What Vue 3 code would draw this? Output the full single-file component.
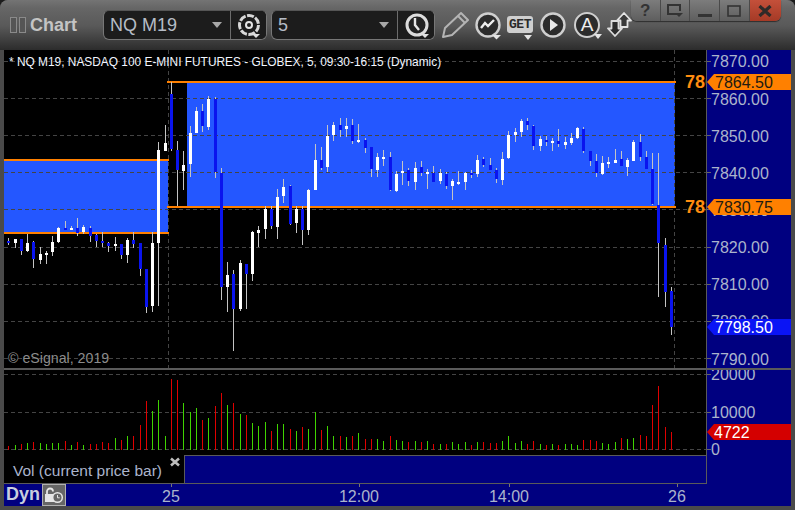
<script setup>
const bars = [
['b',453,459,445,465],['w',447,459,447,474],['b',447,483,447,495],['w',459,483,432,486],['b',456,507,453,534],
['w',492,510,471,522],['w',489,495,483,522],['w',456,486,438,498],['w',414,456,411,459],['b',414,420,393,420],
['w',414,420,408,420],['b',414,429,384,438],['w',411,426,405,432],['b',414,438,408,456],['b',435,453,432,471],
['b',453,459,426,471],['b',459,468,456,486],['w',462,468,441,483],['b',462,495,462,507],['w',450,495,444,519],
['b',450,462,426,474],['b',459,537,459,558],['b',537,651,537,669],['w',459,648,426,666],['w',180,459,156,648],
['w',159,183,105,183],['b',12,177,-24,183],['b',180,240,153,348],['w',225,243,183,300],['w',129,222,108,261],
['w',63,129,51,129],['b',63,108,42,126],['w',27,111,18,120],['b',27,246,21,264],['b',249,591,234,630],
['w',555,591,516,666],['b',552,657,540,783],['w',519,657,510,663],['b',522,552,522,657],['w',426,552,423,573],
['w',420,429,408,471],['w',357,417,348,447],['b',357,408,348,417],['w',321,411,297,447],['w',291,318,267,339],
['b',288,402,285,405],['w',357,399,348,429],['b',357,420,348,465],['w',300,420,297,435],['w',210,300,162,300],
['b',210,234,171,240],['w',138,231,105,246],['w',105,135,96,153],['b',105,120,84,141],['w',108,117,84,141],
['b',105,153,87,162],['w',150,156,102,159],['b',150,174,144,189],['b',171,237,171,261],['w',201,240,189,261],
['w',201,207,180,228],['b',201,300,186,303],['w',252,303,243,306],['w',243,249,213,285],['b',240,273,234,288],
['w',234,276,216,300],['b',231,249,213,258],['w',246,252,237,297],['b',249,276,228,276],['w',249,273,237,282],
['b',252,288,246,297],['w',273,288,267,330],['w',276,282,243,285],['w',249,276,246,300],['b',249,255,240,264],
['w',210,252,195,261],['b',207,225,201,231],['b',225,240,204,240],['b',240,267,234,279],['w',207,270,186,285],
['w',135,204,123,207],['w',126,135,114,156],['w',93,126,87,141],['b',93,105,84,120],['b',108,168,105,180],
['w',147,168,138,183],['b',150,156,138,168],['w',153,159,144,183],['b',153,162,117,171],['w',156,165,141,177],
['w',144,159,129,165],['w',114,144,111,147],['b',117,183,111,189],['b',183,213,183,228],['b',213,249,192,261],
['w',219,252,198,255],['w',216,222,201,234],['w',210,219,177,219],['b',207,228,183,228],['w',210,231,204,258],
['w',156,213,150,213],['b',156,201,132,213],['b',201,237,183,237],['b',237,342,189,345],['b',345,459,189,621],
['b',465,606,444,651],['b',603,711,591,735]
]
const barX = i => Math.ceil(8 + i * 6.25)
const py = v => 90 + v / 3
const candles = bars.map((b, i) => ({
  x: barX(i), blue: b[0] === 'b', top: py(b[1]), h: Math.max(py(b[2]) - py(b[1]), 2), wt: py(b[3]), wb: py(b[4])
}))

const vol = [
'r243','g240','r237','g234','r231','g234','g237','g234','g234','r228','g240','r231','g240','r237','r237','r231',
'r234','g219','r225','g213','r213','r180','r108','g138','g105','g213','r42','r45','g114','g141','g129','r165',
'g159','r123','r84','g120','r114','g147','r150','g174','g183','g171','r198','g177','g177','r192','g198','r186',
'g192','g141','r195','g183','g213','r213','g216','r213','g204','r222','r222','g222','g228','r213','g225','g228',
'r231','g228','r231','g228','r237','g237','r237','g231','g237','g231','r240','g231','r231','r234','r234','g228',
'g213','g234','g228','r237','r228','g237','r240','g237','r240','g237','g237','g240','r225','r225','r228','g234',
'g237','g231','r219','g222','g219','r210','r213','r120','r63','r186','r201'
].map((s, i) => ({ x: barX(i) + 0.5, red: s[0] === 'r', top: 365 + Number(s.slice(1)) / 3 }))

const grid = [61, 98, 135, 172, 209, 247, 284, 321, 358]
const baselines = [67, 105, 142, 179, 216, 253, 290, 327, 365]
const prices = ['7870.00','7860.00','7850.00','7840.00','7830.00','7820.00','7810.00','7800.00','7790.00']
  .map((t, i) => ({ t, y: grid[i], b: baselines[i] }))
const volLabels = [{ t: '20000', y: 374 }, { t: '10000', y: 412 }, { t: '0', y: 449 }]
const times = [{ t: '25', x: 171 }, { t: '12:00', x: 359 }, { t: '14:00', x: 509 }, { t: '26', x: 677 }]
const tagPts = c => `707,${c} 714,${c - 8} 791,${c - 8} 791,${c + 8} 714,${c + 8}`
</script>

<template>
  <div class="window">
    <header class="toolbar">
      <div class="pin"><span></span><span></span></div>
      <div class="app-title">Chart</div>

      <div class="group first">
        <div class="combo sym"><span>NQ M19</span><i class="caret"></i></div>
        <button class="cell gear">
          <svg width="30" height="28" viewBox="0 0 30 28">
            <circle cx="15" cy="14" r="9.5" fill="none" stroke="#d8d8d8" stroke-width="3" stroke-dasharray="7 1.5"/>
            <circle cx="15" cy="14" r="3" fill="none" stroke="#e4e4e4" stroke-width="2"/>
            <path d="M18 23h8l-4 4z" fill="#e0e0e0"/>
          </svg>
        </button>
      </div>

      <div class="group">
        <div class="combo intv"><span>5</span><i class="caret"></i></div>
        <button class="cell clock">
          <svg width="36" height="28" viewBox="0 0 36 28">
            <circle cx="19" cy="14" r="10" fill="#222" stroke="#dcdcdc" stroke-width="3"/>
            <path d="M17 7v7l4 5" fill="none" stroke="#e6e6e6" stroke-width="2.4"/>
            <path d="M23 23h8l-4 4z" fill="#e0e0e0"/>
          </svg>
        </button>
      </div>

      <svg class="tool pencil" width="28" height="28" viewBox="0 0 28 28">
        <path d="M2 26l2-9L20 2l7 7-16 15z" fill="none" stroke="#b4b4b4" stroke-width="2" stroke-linejoin="round"/>
        <path d="M17 5l7 7" stroke="#b4b4b4" stroke-width="2"/>
      </svg>

      <svg class="tool circle-tool" width="30" height="30" viewBox="0 0 30 30">
        <circle cx="14" cy="13" r="11.5" fill="#2c2c2c" stroke="#cfcfcf" stroke-width="2.4"/>
        <path d="M7 16l4-5 3 3 6-6" fill="none" stroke="#eee" stroke-width="2.4"/>
        <path d="M18 23h9l-4.500 4.500z" fill="#e4e4e4"/>
      </svg>

      <div class="get"><span>GET</span><i></i></div>

      <svg class="tool play" width="26" height="26" viewBox="0 0 26 26">
        <circle cx="13" cy="13" r="11.500" fill="#2c2c2c" stroke="#cfcfcf" stroke-width="2.400"/>
        <path d="M10 7l8 6-8 6z" fill="#e8e8e8"/>
      </svg>

      <div class="auto">
        <span>A</span>
        <i></i>
      </div>

      <svg class="tool arrows" width="26" height="26" viewBox="0 0 26 26">
        <path d="M17 1l7 7.500h-3.500V15h-7V8.500H10z" fill="#3a3a3a" stroke="#e4e4e4" stroke-width="1.800" stroke-linejoin="round"/>
        <path d="M8 24l-7-7.500h3.500V9h7v7.500H15z" fill="#2c2c2c" stroke="#dcdcdc" stroke-width="1.800" stroke-linejoin="round"/>
      </svg>

      <div class="winctl">
        <button class="wbtn q">?</button>
        <button class="wbtn">
          <svg width="18" height="16" viewBox="0 0 18 16"><path d="M12 11H2V2h12v6" fill="none" stroke="#333" stroke-width="2"/><path d="M9 10h8l-4 4z" fill="#333"/></svg>
        </button>
        <button class="wbtn">
          <svg width="14" height="16" viewBox="0 0 14 16"><rect y="11" width="14" height="3" fill="#333"/></svg>
        </button>
        <button class="wbtn">
          <svg width="14" height="12" viewBox="0 0 14 12"><rect x="1" y="1" width="12" height="10" fill="none" stroke="#333" stroke-width="1.600"/></svg>
        </button>
        <button class="wbtn close">
          <svg width="14" height="12" viewBox="0 0 14 12"><path d="M1.500 1l11 10M12.500 1l-11 10" stroke="#2f2a28" stroke-width="3.200"/></svg>
        </button>
      </div>
    </header>

    <main class="content">
      <section class="row price-row">
        <svg class="plot" width="703" height="318" viewBox="4 50 703 318" shape-rendering="crispEdges">
          <rect x="4" y="50" width="702" height="318" fill="#000"/>
          <rect x="4" y="160" width="164" height="73" fill="#2457ff"/>
          <rect x="187" y="83" width="488" height="123" fill="#2457ff"/>
          <line v-for="g in grid" :key="g" x1="4" x2="706" :y1="g + 0.5" :y2="g + 0.5" class="grid"/>
          <line x1="168.5" x2="168.5" y1="50" y2="368" class="grid"/>
          <line x1="674.5" x2="674.5" y1="50" y2="368" class="grid"/>
          <rect x="4" y="159" width="165" height="2" fill="#ff8000"/>
          <rect x="4" y="232" width="165" height="2" fill="#ff8000"/>
          <rect x="167" y="81" width="509" height="2" fill="#ff8000"/>
          <rect x="167" y="206" width="509" height="2" fill="#ff8000"/>
          <g v-for="c in candles" :key="c.x">
            <rect :x="c.x" :y="c.wt" width="1" :height="c.wb - c.wt" fill="#c4c4c4"/>
            <rect :x="c.x - 1" :y="c.top" width="3" :height="c.h" :fill="c.blue ? '#0a14ee' : '#fff'"/>
          </g>
          <line x1="706.5" x2="706.5" y1="50" y2="368" stroke="#5a5a5a"/>
          <g shape-rendering="auto">
            <text x="9" y="66" class="study">* NQ M19, NASDAQ 100 E-MINI FUTURES - GLOBEX, 5, 09:30-16:15 (Dynamic)</text>
            <text x="8" y="363" class="copy">© eSignal, 2019</text>
            <svg x="685" y="50" width="21" height="318" viewBox="685 50 21 318" overflow="hidden">
              <text x="685" y="88" class="lvl">7864.50</text>
              <text x="685" y="213" class="lvl">7830.75</text>
            </svg>
          </g>
        </svg>
        <svg class="axis" width="84" height="318" viewBox="707 50 84 318">
          <g v-for="p in prices" :key="p.t">
            <line x1="707" x2="711" :y1="p.y + 0.5" :y2="p.y + 0.5" stroke="#666"/>
            <text x="711" :y="p.b" class="axl">{{ p.t }}</text>
          </g>
          <polygon :points="tagPts(82)" fill="#ff8000"/>
          <text x="715" y="88" class="axl dark">7864.50</text>
          <polygon :points="tagPts(207)" fill="#ff8000"/>
          <text x="715" y="213" class="axl dark">7830.75</text>
          <polygon :points="tagPts(327)" fill="#0a14f5"/>
          <text x="715" y="333" class="axl bright">7798.50</text>
        </svg>
      </section>

      <div class="divider"></div>

      <section class="row vol-row">
        <svg class="plot" width="703" height="85" viewBox="4 370 703 85" shape-rendering="crispEdges">
          <rect x="4" y="370" width="702" height="85" fill="#000"/>
          <line v-for="v in volLabels" :key="v.t" x1="4" x2="706" :y1="v.y + 0.500" :y2="v.y + 0.500" class="grid"/>
          <line v-for="b in vol" :key="b.x" :x1="b.x" :x2="b.x" :y1="b.top" y2="450" :stroke="b.red ? '#e00000' : '#3fd400'"/>
          <line x1="706.5" x2="706.5" y1="370" y2="455" stroke="#5a5a5a"/>
        </svg>
        <svg class="axis" width="84" height="85" viewBox="707 370 84 85">
          <g v-for="v in volLabels" :key="v.t">
            <line x1="707" x2="711" :y1="v.y + 0.500" :y2="v.y + 0.500" stroke="#666"/>
            <text x="711" :y="v.y + 6" class="axl">{{ v.t }}</text>
          </g>
          <polygon :points="tagPts(432)" fill="#d40000"/>
          <text x="714" y="438" class="axl bright">4722</text>
        </svg>
      </section>

      <section class="row legend-row">
        <div class="legend-main">
          <div class="legend">
            <span>Vol (current price bar)</span>
            <svg class="x" width="10" height="10" viewBox="0 0 10 10"><path d="M1 1.500l8 7M9 1.500l-8 7" stroke="#bcbcbc" stroke-width="2.600"/></svg>
          </div>
          <div class="legend-fill"></div>
        </div>
      </section>

      <section class="row time-row">
        <span class="dyn">Dyn</span>
        <div class="lock">
          <svg width="20" height="18" viewBox="0 0 20 18">
            <path d="M3 9V5.500a3 3 0 0 1 6 0" fill="none" stroke="#e6e6e6" stroke-width="1.800"/>
            <rect x="1" y="8" width="10" height="8" fill="#e6e6e6"/>
            <circle cx="13.500" cy="11.500" r="4.800" fill="#666" stroke="#e6e6e6" stroke-width="1.500"/>
            <path d="M13.500 9v2.800h2.200" fill="none" stroke="#e6e6e6" stroke-width="1"/>
          </svg>
        </div>
        <svg class="times" width="725" height="22" viewBox="66 484 725 22">
          <g v-for="t in times" :key="t.t">
            <line :x1="t.x + 0.500" :x2="t.x + 0.500" y1="484" y2="487" stroke="#777"/>
            <text :x="t.x" y="502" text-anchor="middle" class="axl">{{ t.t }}</text>
          </g>
        </svg>
      </section>
    </main>
  </div>
</template>

<style>
html, body { margin: 0; background: #1c1c1c; }
</style>

<style scoped>
.window {
  width: 795px;
  height: 510px;
  background: #4a4a4a;
  border-radius: 8px 8px 0 0;
  overflow: hidden;
  font-family: "Liberation Sans", Arial, sans-serif;
}
.toolbar {
  position: relative;
  height: 50px;
  display: flex;
  align-items: center;
  background: linear-gradient(#747474 0, #666 8px, #595959 26px, #2c2c2c 50px);
  box-sizing: border-box;
}
.pin { display: flex; gap: 2px; margin-left: 10px; }
.pin span { width: 5px; height: 14px; border: 1px solid #8a8a8a; background: #555; }
.app-title { margin-left: 4px; width: 73px; font-size: 18px; font-weight: bold; color: #c4c4c4; }
.group {
  display: flex;
  height: 30px;
  box-sizing: border-box;
  border: 1px solid #777;
  border-top-color: #555;
  border-radius: 6px;
  background: #1c1c1c;
  overflow: hidden;
}
.combo { display: flex; align-items: center; justify-content: space-between; padding: 0 8px 0 6px; box-sizing: border-box; color: #b6bcc6; font-size: 18px; }
.sym { width: 126px; }
.intv { width: 125px; margin-right: 0; }
.caret { width: 0; height: 0; border-left: 5px solid transparent; border-right: 5px solid transparent; border-top: 6px solid #a8a8a8; }
.cell { padding: 0; margin: 0; background: #1c1c1c; border: 0; border-left: 1px solid #6c6c6c; display: flex; align-items: center; }
.gear { width: 36px; justify-content: center; }
.clock { width: 37px; justify-content: center; }
.group + .group { margin-left: 4px; }
.tool { flex: none; }
.pencil { margin-left: 6px; }
.circle-tool { margin-left: 5px; margin-top: 3px; }
.get { position: relative; margin-left: 2px; width: 28px; height: 30px; }
.get span {
  position: absolute; left: 1px; top: 6px; width: 26px; height: 17px; text-align: center;
  background: #cfcfcf; border-radius: 3px; color: #2a2a2a;
  font: bold 13px/17px "Liberation Mono", monospace;
  letter-spacing: -0.500px;
}
.get i { position: absolute; left: 18px; top: 25px; border-left: 4.500px solid transparent; border-right: 4.500px solid transparent; border-top: 5px solid #e4e4e4; }
.play { margin-left: 6px; }
.auto {
  position: relative; margin-left: 8px; width: 26px; height: 26px; box-sizing: border-box;
  border: 2.400px solid #cfcfcf; border-radius: 50%; background: #2c2c2c;
  display: flex; align-items: center; justify-content: center; color: #eee; font-size: 19px;
}
.auto i { position: absolute; right: -4px; bottom: -3px; border-left: 4.500px solid transparent; border-right: 4.500px solid transparent; border-top: 5px solid #e4e4e4; }
.arrows { margin-left: 7px; }
.winctl {
  position: absolute; left: 631px; top: 0; width: 150px; height: 21px; display: flex;
  border-radius: 0 0 6px 6px; overflow: hidden; box-shadow: 0 1px 1px #2e2e2e;
}
.wbtn {
  flex: 1; padding: 0; margin: 0; border: 0; border-right: 1px solid #4a4a4a;
  background: linear-gradient(#7c7c7c, #5e5e5e);
  display: flex; align-items: center; justify-content: center; color: #333;
}
.q { font: bold 17px "Liberation Sans", Arial, sans-serif; }
.close { flex: 1.100; border-right: 0; background: linear-gradient(#c4503a, #a53a26); }
.content { margin: 0 4px; background: #000080; height: 456px; display: flex; flex-direction: column; }
.row { display: flex; flex: none; }
.plot, .axis, .times { display: block; flex: none; }
.divider { height: 2px; background: #5a5a5a; flex: none; }
.grid { stroke: #444; stroke-dasharray: 4 3; }
.study { font-size: 11.900px; fill: #f2f6ff; }
.copy { font-size: 14.200px; fill: #8c8c8c; }
.lvl { font-size: 18px; font-weight: bold; fill: #ff8c10; }
.axl { font-size: 16px; fill: #abb4cc; }
.dark { fill: #221a10; }
.bright { fill: #fff; }
.legend-row { height: 29px; }
.legend-main { width: 703px; height: 29px; display: flex; box-sizing: border-box; }
.legend { width: 180px; background: #000; position: relative; color: #abb4cc; font-size: 15.500px; border-bottom: 1px solid #5a5a5a; box-sizing: border-box; display: flex; align-items: flex-end; padding: 0 0 3px 9px; }
.legend .x { position: absolute; left: 166px; top: 2px; }
.legend-fill { flex: 1; background: #000080; border: 1px solid #5a5a5a; }
.time-row { height: 22px; align-items: stretch; }
.dyn { width: 38px; font-size: 18px; font-weight: bold; color: #c8cede; padding-left: 2px; box-sizing: border-box; line-height: 20px; }
.lock { width: 24px; box-sizing: border-box; background: #666; border: 1px solid #b0b0b0; display: flex; align-items: center; justify-content: center; }
</style>
